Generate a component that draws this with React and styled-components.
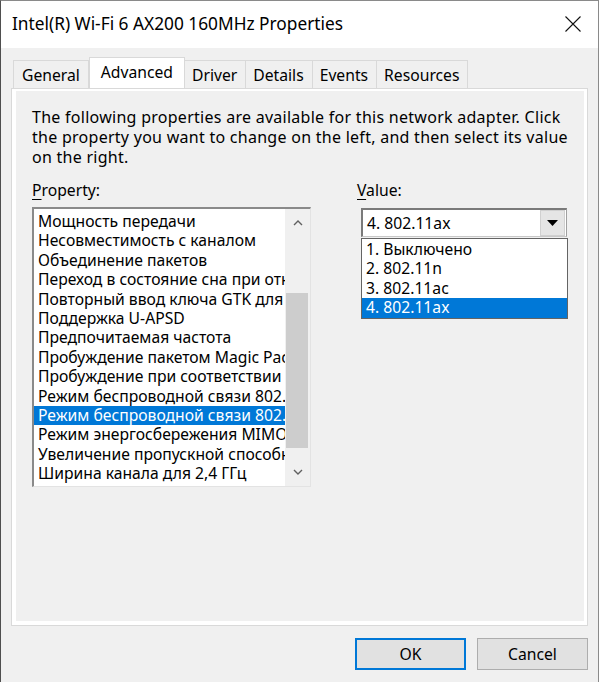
import React from 'react'
import styled, { createGlobalStyle } from 'styled-components'

const GlobalStyle = createGlobalStyle`
  html, body {
    margin: 0;
    padding: 0;
    background: #f0f0f0;
  }
  * { box-sizing: border-box; }
`

const FONT = `"Noto Sans", "Open Sans", sans-serif`

const Window = styled.div`
  width: 599px;
  height: 682px;
  display: flex;
  flex-direction: column;
  border-left: 1px solid #4f4f4f;
  border-right: 1px solid #8a8a8a;
  border-top: 1px solid #8a8a8a;
  font-family: ${FONT};
  font-size: 15.7px;
  color: #000;
  background: #f0f0f0;
`

const TitleBar = styled.div`
  height: 47px;
  background: #fff;
  display: flex;
  align-items: center;
  justify-content: space-between;
  padding: 0 17px 2px 11px;
`

const Title = styled.div`
  font-size: 17.3px;
`

const Body = styled.div`
  flex: 1;
  display: flex;
  flex-direction: column;
  padding: 9px 10px 12px 10px;
`

const TabRow = styled.div`
  height: 31px;
  display: flex;
  align-items: flex-end;
  padding-left: 2px;
`

const Tab = styled.div`
  height: ${({ $active }) => ($active ? '31px' : '28px')};
  padding: 0 ${({ $active }) => ($active ? '11px' : '8px')} 0 ${({ $active }) => ($active ? '11px' : '7px')};
  padding-left: ${({ $first }) => ($first ? '8px' : null)};
  padding-bottom: ${({ $active }) => ($active ? '3px' : '0')};
  display: flex;
  align-items: center;
  border: 1px solid #d9d9d9;
  border-bottom: none;
  border-left-width: ${({ $first, $active }) => ($first || $active ? '1px' : '0')};
  background: ${({ $active }) => ($active ? '#fff' : '#f0f0f0')};
`

const Panel = styled.div`
  flex: 1;
  background: #fff;
  border: 1px solid #d9d9d9;
  padding: 2px 4px 4px 4px;
  display: flex;
`

const Page = styled.div`
  flex: 1;
  background: #f0f0f0;
  padding: 16px 16px 0 16px;
`

const Description = styled.p`
  margin: 0;
  line-height: 20px;
  font-size: 16px;
  letter-spacing: 0.27px;
  white-space: nowrap;
`

const Columns = styled.div`
  display: flex;
  margin-top: 13px;
  gap: 46px;
`

const Column = styled.div`
  display: flex;
  flex-direction: column;
`

const Label = styled.div`
  line-height: 20px;
  height: 20px;
  u { text-decoration-thickness: 1px; text-underline-offset: 3px; }
`

const ListBox = styled.div`
  margin-top: 7px;
  width: 279px;
  height: 280px;
  background: #fff;
  border-top: 2px solid #8a8a8a;
  border-left: 2px solid #8a8a8a;
  border-right: 1px solid #e3e3e3;
  border-bottom: 1px solid #e3e3e3;
  display: flex;
  overflow: hidden;
`

const Items = styled.div`
  flex: 1;
  padding-top: 3px;
  overflow: hidden;
`

const Item = styled.div`
  height: 19.4px;
  line-height: 19.4px;
  padding-left: ${({ $pad }) => $pad || 4}px;
  white-space: nowrap;
  overflow: hidden;
  background: ${({ $selected }) => ($selected ? '#0078d7' : 'transparent')};
  color: ${({ $selected }) => ($selected ? '#fff' : '#000')};
`

const ScrollBar = styled.div`
  width: 25px;
  background: #f0f0f0;
  display: flex;
  flex-direction: column;
`

const ScrollButton = styled.div`
  height: 28px;
  display: flex;
  align-items: center;
  justify-content: center;
`

const Track = styled.div`
  flex: 1;
  position: relative;
`

const Thumb = styled.div`
  position: absolute;
  left: 1px;
  right: 2px;
  background: #cdcdcd;
`

const Combo = styled.div`
  margin-top: 8px;
  margin-left: 4px;
  width: 206px;
  height: 29px;
  display: flex;
  align-items: center;
  background: #fff;
  border-top: 2px solid #7a7a7a;
  border-left: 2px solid #7a7a7a;
  border-right: 1px solid #a0a0a0;
  border-bottom: 1px solid #c8c8c8;
`

const ComboText = styled.div`
  flex: 1;
  padding-left: 4px;
`

const DropButton = styled.div`
  width: 25px;
  height: 26px;
  margin-right: 1px;
  background: #e5e5e5;
  border: 1px solid #d0d0d0;
  display: flex;
  align-items: center;
  justify-content: center;
`

const DropList = styled.div`
  margin-top: 1px;
  margin-left: 4px;
  width: 207px;
  background: #fff;
  border: 1px solid #646464;
  padding-top: 1px;
`

const ButtonRow = styled.div`
  display: flex;
  justify-content: flex-end;
  gap: 11px;
  margin-top: 12px;
`

const Button = styled.button`
  width: 111px;
  height: 32px;
  font-family: ${FONT};
  font-size: 15.7px;
  color: #000;
  background: #e1e1e1;
  border: ${({ $default }) => ($default ? '2px solid #0078d7' : '1px solid #adadad')};
  padding: 0;
`

const properties = [
  'Мощность передачи',
  'Несовместимость с каналом',
  'Объединение пакетов',
  'Переход в состояние сна при отключении',
  'Повторный ввод ключа GTK для WoWLAN',
  'Поддержка U-APSD',
  'Предпочитаемая частота',
  'Пробуждение пакетом Magic Packet',
  'Пробуждение при соответствии шаблону',
  'Режим беспроводной связи 802.11a/b/g',
  'Режим беспроводной связи 802.11n/ac/ax',
  'Режим энергосбережения MIMO',
  'Увеличение пропускной способности',
  'Ширина канала для 2,4 ГГц',
]

const values = ['1. Выключено', '2. 802.11n', '3. 802.11ac', '4. 802.11ax']

const tabs = ['General', 'Advanced', 'Driver', 'Details', 'Events', 'Resources']

const CloseIcon = () => (
  <svg width="16" height="16" viewBox="0 0 16 16">
    <path d="M0.5 0.5 L15.5 15.5 M15.5 0.5 L0.5 15.5" stroke="#111" strokeWidth="1.1" fill="none" />
  </svg>
)

const Chevron = ({ down }) => (
  <svg width="10" height="6" viewBox="0 0 10 6">
    <path d={down ? 'M1 1 L5 5 L9 1' : 'M1 5 L5 1 L9 5'} stroke="#606060" strokeWidth="1.4" fill="none" />
  </svg>
)

const Triangle = () => (
  <svg width="11" height="6" viewBox="0 0 11 6">
    <path d="M0 0 H11 L5.5 6 Z" fill="#000" />
  </svg>
)

export default function App() {
  return (
    <>
      <GlobalStyle />
      <Window>
        <TitleBar>
          <Title>Intel(R) Wi-Fi 6 AX200 160MHz Properties</Title>
          <CloseIcon />
        </TitleBar>
        <Body>
          <TabRow>
            {tabs.map((t, i) => (
              <Tab key={t} $active={t === 'Advanced'} $first={i === 0}>{t}</Tab>
            ))}
          </TabRow>
          <Panel>
            <Page>
              <Description>
                The following properties are available for this network adapter. Click
                <br />
                the property you want to change on the left, and then select its value
                <br />
                on the right.
              </Description>
              <Columns>
                <Column>
                  <Label><u>P</u>roperty:</Label>
                  <ListBox>
                    <Items>
                      {properties.map((p, i) => (
                        <Item key={p} $selected={i === 10}>{p}</Item>
                      ))}
                    </Items>
                    <ScrollBar>
                      <ScrollButton><Chevron /></ScrollButton>
                      <Track>
                        <Thumb style={{ top: 56, height: 155 }} />
                      </Track>
                      <ScrollButton><Chevron down /></ScrollButton>
                    </ScrollBar>
                  </ListBox>
                </Column>
                <Column>
                  <Label><u>V</u>alue:</Label>
                  <Combo>
                    <ComboText>4. 802.11ax</ComboText>
                    <DropButton><Triangle /></DropButton>
                  </Combo>
                  <DropList>
                    {values.map((v, i) => (
                      <Item key={v} $pad={4} $selected={i === 3}>{v}</Item>
                    ))}
                  </DropList>
                </Column>
              </Columns>
            </Page>
          </Panel>
          <ButtonRow>
            <Button $default>OK</Button>
            <Button>Cancel</Button>
          </ButtonRow>
        </Body>
      </Window>
    </>
  )
}
